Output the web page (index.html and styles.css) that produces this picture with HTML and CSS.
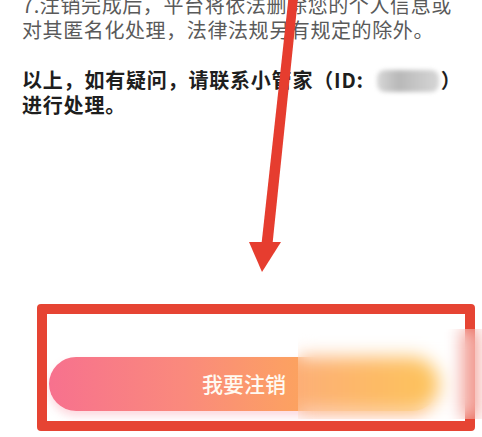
FILE: index.html
```html
<!DOCTYPE html>
<html lang="zh-CN">
<head>
<meta charset="utf-8">
<title>注销账号</title>
<link rel="stylesheet" href="styles.css">
</head>
<body>
<div class="page">
  <div class="content">
    <p class="para">7.注销完成后，平台将依法删除您的个人信息或<br>对其匿名化处理，法律法规另有规定的除外。</p>
    <p class="para bold">以上，如有疑问，请联系小管家（ID:<span class="masked"></span>）<br>进行处理。</p>
  </div>
  <div class="footer">
    <button class="btn">我要注销</button>
  </div>
  <div class="mark-box"></div>
  <div class="blur-patch"></div>
  <svg class="arrow" width="482" height="437" viewBox="0 0 482 437">
    <polygon points="288.5,-2 298,-2 272.5,244 261.5,244" fill="#e63d2f"/>
    <polygon points="249,242 281,242 262,272" fill="#e63d2f"/>
  </svg>
</div>
</body>
</html>
```

FILE: styles.css
```css
html, body {
  margin: 0;
  padding: 0;
  background: #ffffff;
}
.page {
  position: relative;
  width: 482px;
  height: 437px;
  overflow: hidden;
  display: flex;
  flex-direction: column;
  font-family: "Noto Sans CJK SC", "Noto Sans", sans-serif;
}
.content {
  margin-top: -8px;
  padding-left: 22px;
}
.para {
  margin: 0 0 25px 0;
  font-size: 20px;
  line-height: 25px;
  letter-spacing: 0.6px;
  color: #5a5a5a;
  white-space: nowrap;
}
.bold {
  font-weight: 700;
  color: #1e1e1e;
  letter-spacing: 0.8px;
}
.masked {
  display: inline-block;
  width: 62px;
  height: 22px;
  margin: 0 2px 0 13px;
  vertical-align: -4px;
  border-radius: 8px;
  background: linear-gradient(90deg, #d8d8d8 0%, #b8b8b8 35%, #c4c4c4 60%, #d6d6d6 100%);
  filter: blur(2px);
}
.footer {
  margin-top: auto;
  padding: 0 0 26px 49px;
}
.btn {
  display: block;
  width: 390px;
  height: 54px;
  border: none;
  border-radius: 27px;
  background: linear-gradient(90deg, #f7718e 0%, #fa8a7c 35%, #fc9f64 60%, #fdb04a 85%, #fdbb40 100%);
  box-shadow: 0 5px 8px rgba(247, 120, 140, 0.28);
  color: #fffaf2;
  font-family: "Noto Sans CJK SC", sans-serif;
  font-size: 21px;
  font-weight: 500;
  padding: 0 0 2px 0;
}
.mark-box {
  position: absolute;
  left: 37px;
  top: 304px;
  width: 418px;
  height: 107px;
  border: 10px solid #e64433;
  border-radius: 4px;
}
.blur-patch {
  position: absolute;
  left: 298px;
  top: 329px;
  width: 184px;
  height: 90px;
  background: rgba(255, 255, 255, 0.15);
  backdrop-filter: blur(9px);
  -webkit-backdrop-filter: blur(9px);
}
.arrow {
  position: absolute;
  left: 0;
  top: 0;
}
```
